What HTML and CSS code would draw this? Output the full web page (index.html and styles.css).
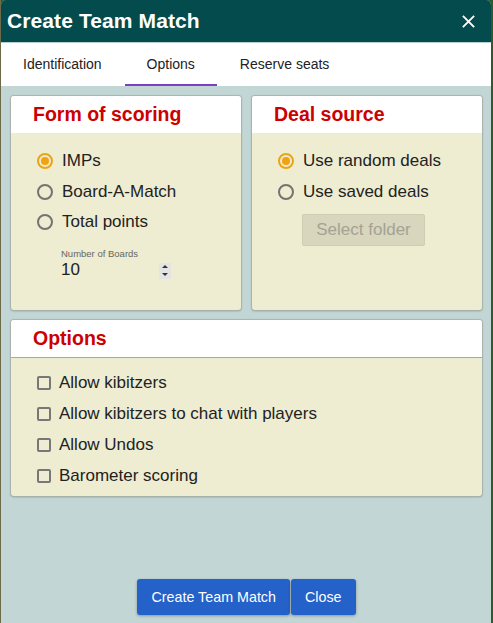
FILE: index.html
```html
<!DOCTYPE html>
<html>
<head>
<meta charset="utf-8">
<link rel="stylesheet" href="styles.css">
</head>
<body>
<div class="dialog">
  <div class="titlebar">
    <span class="title">Create Team Match</span>
    <svg class="close" width="16" height="16" viewBox="0 0 16 16"><path d="M2 2 L14 14 M14 2 L2 14" stroke="#fff" stroke-width="2" fill="none"/></svg>
  </div>
  <div class="tabs">
    <div class="tab">Identification</div>
    <div class="tab active">Options</div>
    <div class="tab">Reserve seats</div>
  </div>
  <div class="content">
    <div class="row">
      <div class="panel">
        <div class="phead">Form of scoring</div>
        <div class="pbody">
          <div class="opt"><span class="radio on"></span>IMPs</div>
          <div class="opt"><span class="radio"></span>Board-A-Match</div>
          <div class="opt"><span class="radio"></span>Total points</div>
          <div class="num">
            <div class="numlabel">Number of Boards</div>
            <div class="numrow">
              <span class="numval">10</span>
              <span class="spin"><span class="up"></span><span class="down"></span></span>
            </div>
          </div>
        </div>
      </div>
      <div class="panel">
        <div class="phead">Deal source</div>
        <div class="pbody">
          <div class="opt"><span class="radio on"></span>Use random deals</div>
          <div class="opt"><span class="radio"></span>Use saved deals</div>
          <div class="folder">Select folder</div>
        </div>
      </div>
    </div>
    <div class="panel wide">
      <div class="phead line">Options</div>
      <div class="pbody checks">
        <div class="chk"><span class="box"></span>Allow kibitzers</div>
        <div class="chk"><span class="box"></span>Allow kibitzers to chat with players</div>
        <div class="chk"><span class="box"></span>Allow Undos</div>
        <div class="chk"><span class="box"></span>Barometer scoring</div>
      </div>
    </div>
    <div class="actions">
      <button class="btn">Create Team Match</button>
      <button class="btn">Close</button>
    </div>
  </div>
</div>
</body>
</html>
```
FILE: styles.css
```css
html, body {
  margin: 0;
  padding: 0;
  height: 100%;
}
body {
  background: #2f5a2c;
  border-left: 1px solid #6d6a4a;
  font-family: "Liberation Sans", Arial, sans-serif;
  overflow: hidden;
}
.dialog {
  width: 490px;
  height: 623px;
  background: #c1d6d5;
  display: flex;
  flex-direction: column;
  border-top-left-radius: 5px;
  border-top-right-radius: 5px;
  overflow: hidden;
}
.titlebar {
  height: 42px;
  background: #034b4c;
  color: #fff;
  display: flex;
  align-items: center;
  justify-content: space-between;
  padding: 0 15px 0 6px;
  border-bottom: 1px solid #b9cfcf;
  flex-shrink: 0;
}
.title {
  font-size: 21px;
  font-weight: bold;
  letter-spacing: 0.1px;
}
.close {
  width: 15px;
  height: 15px;
}
.tabs {
  height: 43px;
  background: #fff;
  display: flex;
  padding-left: 0;
  flex-shrink: 0;
}
.tab {
  font-size: 14px;
  color: #222;
  padding: 0 22px;
  display: flex;
  align-items: center;
  border-bottom: 2px solid transparent;
  margin-right: 1px;
}
.tab.active {
  border-bottom-color: #7b3fc0;
}
.content {
  flex: 1;
  display: flex;
  flex-direction: column;
  padding: 10px 9px 8px 10px;
}
.row {
  display: flex;
  gap: 11px;
}
.panel {
  width: 230px;
  height: 214px;
  background: #eeecd1;
  border-radius: 3px;
  box-shadow: 0 0 1px 1px #a9b3ad, 0 1px 2px #8e9691;
  display: flex;
  flex-direction: column;
  overflow: hidden;
}
.panel.wide {
  width: 471px;
  height: 176px;
  margin-top: 10px;
}
.phead {
  height: 37px;
  background: #fff;
  color: #cc0000;
  font-size: 19.5px;
  font-weight: bold;
  display: flex;
  align-items: center;
  padding-left: 22px;
  flex-shrink: 0;
}
.phead.line {
  height: 37px;
  border-bottom: 1px solid #a8aaa0;
}
.pbody {
  padding: 13px 0 0 26px;
  display: flex;
  flex-direction: column;
}
.opt {
  height: 30.5px;
  display: flex;
  align-items: center;
  font-size: 17px;
  color: #222;
}
.radio {
  width: 12px;
  height: 12px;
  border: 2px solid #737373;
  border-radius: 50%;
  margin-right: 9px;
  box-sizing: content-box;
  display: flex;
  align-items: center;
  justify-content: center;
}
.radio.on {
  border-color: #eea315;
}
.radio.on::after {
  content: "";
  width: 8px;
  height: 8px;
  border-radius: 50%;
  background: #eea315;
}
.num {
  margin-left: 24px;
  margin-top: 10px;
}
.numlabel {
  font-size: 9.5px;
  color: #666;
}
.numrow {
  display: flex;
  align-items: center;
  width: 110px;
  justify-content: space-between;
  margin-top: 1px;
}
.numval {
  font-size: 17px;
  color: #222;
}
.spin {
  width: 12px;
  height: 16px;
  background: #e4e4e4;
  display: flex;
  flex-direction: column;
  align-items: center;
  justify-content: space-around;
  margin-top: 2px;
}
.spin .up {
  width: 0; height: 0;
  border-left: 3px solid transparent;
  border-right: 3px solid transparent;
  border-bottom: 3px solid #333;
}
.spin .down {
  width: 0; height: 0;
  border-left: 3px solid transparent;
  border-right: 3px solid transparent;
  border-top: 3px solid #333;
}
.folder {
  margin-top: 7px;
  margin-left: 24px;
  width: 121px;
  height: 30px;
  background: #d8d6bc;
  border: 1px solid #cfcdb3;
  border-radius: 2px;
  color: #a3a396;
  font-size: 17px;
  display: flex;
  align-items: center;
  justify-content: center;
}
.checks {
  padding-top: 9px;
}
.chk {
  height: 31px;
  flex-shrink: 0;
  display: flex;
  align-items: center;
  font-size: 17px;
  color: #222;
}
.box {
  width: 10px;
  height: 10px;
  border: 2px solid #777;
  border-radius: 2px;
  margin-right: 8px;
  box-sizing: content-box;
}
.actions {
  margin-top: auto;
  display: flex;
  justify-content: center;
  gap: 1px;
}
.btn {
  height: 36px;
  background: #2461c9;
  color: #fff;
  border: none;
  border-radius: 3px;
  font-family: "Liberation Sans", Arial, sans-serif;
  font-size: 14.3px;
  padding: 0 14px;
  box-shadow: 0 1px 3px rgba(0,0,0,0.3);
}
```
